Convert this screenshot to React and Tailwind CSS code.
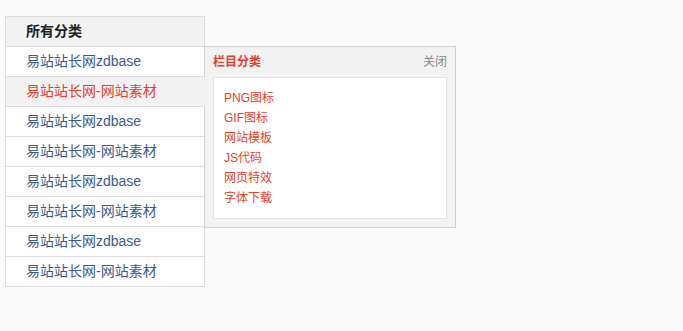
import React from "react";

const items = [
  "易站站长网zdbase",
  "易站站长网-网站素材",
  "易站站长网zdbase",
  "易站站长网-网站素材",
  "易站站长网zdbase",
  "易站站长网-网站素材",
  "易站站长网zdbase",
  "易站站长网-网站素材",
];

const links = ["PNG图标", "GIF图标", "网站模板", "JS代码", "网页特效", "字体下载"];

export default function App() {
  const active = 1; // hovered row

  return (
    <div
      className="min-h-screen bg-[#fafafa] pl-[5px] pt-[16px]"
      style={{ fontFamily: '"Liberation Sans", Arial, "Noto Sans CJK SC", sans-serif' }}
    >
      <div className="flex items-start">
        {/* category list */}
        <div className="w-[200px] border-x border-t border-[#dddddd] bg-white">
          <div className="flex h-[30px] items-center border-b border-[#dddddd] bg-[#f2f2f2] pl-[20px] text-[14px] font-bold text-[#222]">
            所有分类
          </div>
          {items.map((t, i) => (
            <div
              key={i}
              className={
                i === active
                  ? "relative z-10 -mr-px flex h-[30px] items-center border-b border-[#dddddd] bg-[#f2f2f2] pl-[20px] text-[14px] text-[#e5412a]"
                  : "flex h-[30px] items-center border-b border-[#dddddd] pl-[20px] text-[14px] text-[#3a5a8a]"
              }
            >
              {t}
            </div>
          ))}
        </div>

        {/* popup panel */}
        <div className="-ml-px mt-[30px] w-[252px] border border-[#d0d0d0] bg-[#f2f2f2] px-[8px] pb-[8px]">
          <div className="flex h-[30px] items-center justify-between text-[12px]">
            <span className="font-bold text-[#e5412a]">栏目分类</span>
            <span className="cursor-pointer text-[#888]">关闭</span>
          </div>
          <div className="border border-[#e3e3e3] bg-white pb-[10px] pl-[10px] pt-[10px]">
            {links.map((l) => (
              <a key={l} href="#" className="block text-[12px] leading-[20px] text-[#e5412a]">
                {l}
              </a>
            ))}
          </div>
        </div>
      </div>
    </div>
  );
}
